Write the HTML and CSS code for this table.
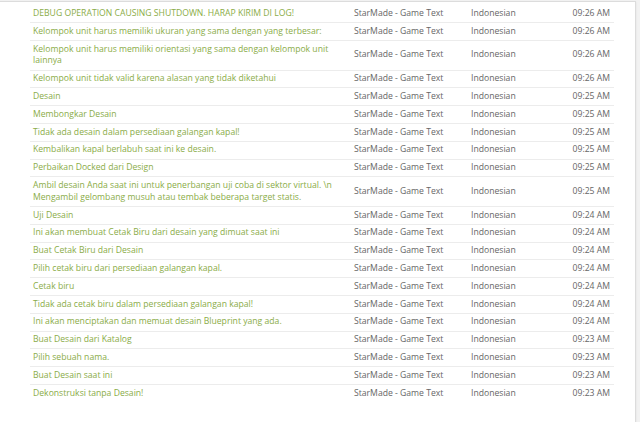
FILE: index.html
```html
<!DOCTYPE html>
<html>
<head>
<meta charset="utf-8">
<link rel="stylesheet" href="styles.css">
</head>
<body>
<div class="panel">
  <table class="log">
    <colgroup>
      <col class="c-text"><col class="c-proj"><col class="c-lang"><col class="c-time">
    </colgroup>
    <tbody>
      <tr><td class="t">DEBUG OPERATION CAUSING SHUTDOWN. HARAP KIRIM DI LOG!</td><td>StarMade - Game Text</td><td>Indonesian</td><td class="tm">09:26 AM</td></tr>
      <tr><td class="t">Kelompok unit harus memiliki ukuran yang sama dengan yang terbesar:</td><td>StarMade - Game Text</td><td>Indonesian</td><td class="tm">09:26 AM</td></tr>
      <tr><td class="t">Kelompok unit harus memiliki orientasi yang sama dengan kelompok unit lainnya</td><td>StarMade - Game Text</td><td>Indonesian</td><td class="tm">09:26 AM</td></tr>
      <tr><td class="t">Kelompok unit tidak valid karena alasan yang tidak diketahui</td><td>StarMade - Game Text</td><td>Indonesian</td><td class="tm">09:26 AM</td></tr>
      <tr><td class="t">Desain</td><td>StarMade - Game Text</td><td>Indonesian</td><td class="tm">09:25 AM</td></tr>
      <tr><td class="t">Membongkar Desain</td><td>StarMade - Game Text</td><td>Indonesian</td><td class="tm">09:25 AM</td></tr>
      <tr><td class="t">Tidak ada desain dalam persediaan galangan kapal!</td><td>StarMade - Game Text</td><td>Indonesian</td><td class="tm">09:25 AM</td></tr>
      <tr><td class="t">Kembalikan kapal berlabuh saat ini ke desain.</td><td>StarMade - Game Text</td><td>Indonesian</td><td class="tm">09:25 AM</td></tr>
      <tr><td class="t">Perbaikan Docked dari Design</td><td>StarMade - Game Text</td><td>Indonesian</td><td class="tm">09:25 AM</td></tr>
      <tr><td class="t">Ambil desain Anda saat ini untuk penerbangan uji coba di sektor virtual. \n Mengambil gelombang musuh atau tembak beberapa target statis.</td><td>StarMade - Game Text</td><td>Indonesian</td><td class="tm">09:25 AM</td></tr>
      <tr><td class="t">Uji Desain</td><td>StarMade - Game Text</td><td>Indonesian</td><td class="tm">09:24 AM</td></tr>
      <tr><td class="t">Ini akan membuat Cetak Biru dari desain yang dimuat saat ini</td><td>StarMade - Game Text</td><td>Indonesian</td><td class="tm">09:24 AM</td></tr>
      <tr><td class="t">Buat Cetak Biru dari Desain</td><td>StarMade - Game Text</td><td>Indonesian</td><td class="tm">09:24 AM</td></tr>
      <tr><td class="t">Pilih cetak biru dari persediaan galangan kapal.</td><td>StarMade - Game Text</td><td>Indonesian</td><td class="tm">09:24 AM</td></tr>
      <tr><td class="t">Cetak biru</td><td>StarMade - Game Text</td><td>Indonesian</td><td class="tm">09:24 AM</td></tr>
      <tr><td class="t">Tidak ada cetak biru dalam persediaan galangan kapal!</td><td>StarMade - Game Text</td><td>Indonesian</td><td class="tm">09:24 AM</td></tr>
      <tr><td class="t">Ini akan menciptakan dan memuat desain Blueprint yang ada.</td><td>StarMade - Game Text</td><td>Indonesian</td><td class="tm">09:24 AM</td></tr>
      <tr><td class="t">Buat Desain dari Katalog</td><td>StarMade - Game Text</td><td>Indonesian</td><td class="tm">09:23 AM</td></tr>
      <tr><td class="t">Pilih sebuah nama.</td><td>StarMade - Game Text</td><td>Indonesian</td><td class="tm">09:23 AM</td></tr>
      <tr><td class="t">Buat Desain saat ini</td><td>StarMade - Game Text</td><td>Indonesian</td><td class="tm">09:23 AM</td></tr>
      <tr><td class="t">Dekonstruksi tanpa Desain!</td><td>StarMade - Game Text</td><td>Indonesian</td><td class="tm">09:23 AM</td></tr>
    </tbody>
  </table>
</div>
</body>
</html>
```

FILE: styles.css
```css
html, body {
  margin: 0;
  padding: 0;
  background: #f2f2f2;
}
body {
  font-family: "Open Sans", "DejaVu Sans", sans-serif;
  font-size: 8.65px;
  line-height: 11.8px;
  color: #666;
}
.panel {
  width: 636px;
  margin-top: 1px;
  box-sizing: border-box;
  background: #fff;
  border-top: 1px solid #dcdcdc;
  border-right: 1px solid #dcdcdc;
  border-bottom: 1px solid #d6d6d6;
  box-shadow: 0 1px 2px rgba(0,0,0,0.08);
  padding: 3px 0 20px 30px;
}
.log {
  width: 584px;
  border-collapse: collapse;
  table-layout: fixed;
}
.c-text { width: 321px; }
.c-proj { width: 117px; }
.c-lang { width: 78px; }
.log td {
  padding: 2.5px 3px;
  vertical-align: middle;
  border-top: 1px solid #ececec;
}
.log tr:first-child td { border-top: 0; padding-top: 3px; }
.log td.t { color: #8aac47; }
.log td.tm { text-align: right; padding-right: 4px; }
```
